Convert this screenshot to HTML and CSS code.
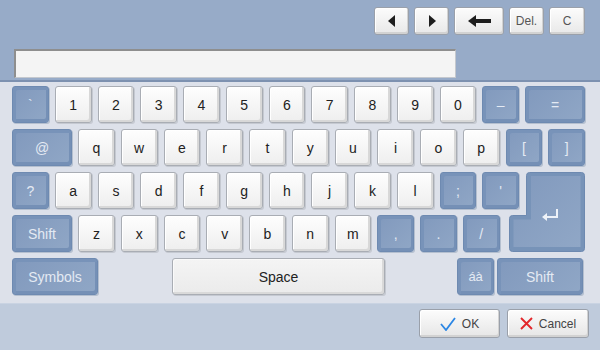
FILE: index.html
```html
<!DOCTYPE html>
<html>
<head>
<meta charset="utf-8">
<link rel="stylesheet" href="styles.css">
</head>
<body>
<div class="top">
  <div class="toolbar">
    <div class="tbtn w35"><svg width="8" height="12" viewBox="0 0 8 12"><polygon points="7,0 7,12 0,6" fill="#1e1e1e"/></svg></div>
    <div class="tbtn w35"><svg width="8" height="12" viewBox="0 0 8 12"><polygon points="1,0 1,12 8,6" fill="#1e1e1e"/></svg></div>
    <div class="tbtn w50"><svg width="23" height="12" viewBox="0 0 23 12"><polygon points="0,6 8,0 8,12" fill="#1e1e1e"/><rect x="7" y="4" width="16" height="4" fill="#1e1e1e"/></svg></div>
    <div class="tbtn w35">Del.</div>
    <div class="tbtn w36">C</div>
  </div>
  <div class="input"></div>
</div>
<div class="kb">
  <div class="row">
    <div class="k b">`</div>
    <div class="k w">1</div><div class="k w">2</div><div class="k w">3</div><div class="k w">4</div><div class="k w">5</div>
    <div class="k w">6</div><div class="k w">7</div><div class="k w">8</div><div class="k w">9</div><div class="k w">0</div>
    <div class="k b">–</div>
    <div class="k b wide">=</div>
  </div>
  <div class="row">
    <div class="k b wide">@</div>
    <div class="k w">q</div><div class="k w">w</div><div class="k w">e</div><div class="k w">r</div><div class="k w">t</div>
    <div class="k w">y</div><div class="k w">u</div><div class="k w">i</div><div class="k w">o</div><div class="k w">p</div>
    <div class="k b">[</div>
    <div class="k b">]</div>
  </div>
  <div class="block34">
    <div class="row r3">
      <div class="k b">?</div>
      <div class="k w">a</div><div class="k w">s</div><div class="k w">d</div><div class="k w">f</div><div class="k w">g</div>
      <div class="k w">h</div><div class="k w">j</div><div class="k w">k</div><div class="k w">l</div>
      <div class="k b">;</div>
      <div class="k b">'</div>
    </div>
    <div class="row r4">
      <div class="k b wide">Shift</div>
      <div class="k w">z</div><div class="k w">x</div><div class="k w">c</div><div class="k w">v</div><div class="k w">b</div>
      <div class="k w">n</div><div class="k w">m</div>
      <div class="k b">,</div>
      <div class="k b">.</div>
      <div class="k b">/</div>
    </div>
    <div class="enter">
      <svg width="76" height="80" viewBox="0 0 76 80">
        <defs>
          <linearGradient id="eg" x1="0" y1="0" x2="1" y2="1">
            <stop offset="0" stop-color="#8199bd"/>
            <stop offset="1" stop-color="#90a7c6"/>
          </linearGradient>
        </defs>
        <path d="M20.5,0.5 H72.5 Q75.5,0.5 75.5,3.5 V76.5 Q75.5,79.5 72.5,79.5 H3.5 Q0.5,79.5 0.5,76.5 V46.5 Q0.5,43.5 3.5,43.5 H17.5 V3.5 Q17.5,0.5 20.5,0.5 Z" fill="#7793b8" stroke="#6d89b0"/>
        <path d="M22,4 H71.5 V75 H4.5 V47.5 H22 Z" fill="url(#eg)"/>
        <path d="M48,37 V45 H36" fill="none" stroke="#eef2f8" stroke-width="2"/>
        <polygon points="33,45 38,41 38,49" fill="#eef2f8"/>
      </svg>
    </div>
  </div>
  <div class="row r5">
    <div class="k b sym">Symbols</div>
    <div class="k space">Space</div>
    <div class="k b acc">áà</div>
    <div class="k b shift2">Shift</div>
  </div>
</div>
<div class="bottom">
  <div class="bbtn">
    <svg width="16" height="14" viewBox="0 0 16 14"><polyline points="1,7 6,13 15,1" fill="none" stroke="#2b86e4" stroke-width="1.8"/></svg>
    <span>OK</span>
  </div>
  <div class="bbtn">
    <svg width="13" height="13" viewBox="0 0 13 13"><path d="M1,1 L12,12 M12,1 L1,12" stroke="#e3262b" stroke-width="1.9"/></svg>
    <span>Cancel</span>
  </div>
</div>
</body>
</html>
```

FILE: styles.css
```css
* { box-sizing: border-box; margin: 0; padding: 0; }

body {
  width: 600px;
  height: 350px;
  overflow: hidden;
  font-family: "Liberation Sans", Arial, sans-serif;
  background: #dde1ea;
}

.top {
  height: 82px;
  background: #97abc8;
  border-bottom: 2px solid #7d91b0;
  padding-top: 7px;
}

.toolbar {
  display: flex;
  justify-content: flex-end;
  gap: 5px;
  padding-right: 15px;
  height: 28px;
}

.tbtn {
  height: 28px;
  display: flex;
  align-items: center;
  justify-content: center;
  border: 1px solid #9aa0aa;
  border-radius: 3px;
  background: linear-gradient(#fcfcfc, #e8e8e8);
  box-shadow: inset -1px -2px 0 #d2d2d2, inset 1px 1px 0 #ffffff;
  font-size: 12px;
  color: #555;
}

.w35 { width: 35px; }
.w36 { width: 36px; }
.w50 { width: 50px; }

.input {
  margin: 14px 0 0 14px;
  width: 442px;
  height: 29px;
  background: #f4f4f4;
  border: 1px solid #c4c8ce;
  border-top: 2px solid #8e8e8e;
  border-left: 2px solid #8e8e8e;
}

.kb {
  height: 221px;
  padding: 4px 0 0 12px;
  display: flex;
  flex-direction: column;
  gap: 6px;
}

.row {
  display: flex;
  gap: 6px;
  height: 37px;
}

.k {
  width: 36.75px;
  height: 37px;
  flex: none;
  display: flex;
  align-items: center;
  justify-content: center;
  font-size: 14px;
  border-radius: 3px;
}

.w {
  color: #222;
  background: linear-gradient(#fefefe, #eeeeee);
  border: 1px solid #a9adb4;
  box-shadow: inset -2px -2px 0 #d8d8d8, inset 1px 1px 0 #ffffff, 1px 1px 0 #c5c9d1;
}

.b {
  color: #e4eaf3;
  background: linear-gradient(135deg, #8199bd, #90a7c6);
  border: 1px solid #6e8ab1;
  box-shadow: inset 3px 3px 0 #7893b9, inset -2px -3px 0 #7590b6, 1px 1px 0 #b4bfcf;
}

.wide { width: 60px; }

.block34 {
  display: grid;
  grid-template-columns: 497px 17px 59px;
  grid-template-rows: 37px 37px;
  row-gap: 6px;
}

.r3 { grid-column: 1 / 3; grid-row: 1; }
.r4 { grid-column: 1; grid-row: 2; }

.enter {
  grid-column: 2 / 4;
  grid-row: 1 / 3;
  height: 80px;
}

.enter svg { display: block; }

.r5 { padding-right: 17px; }

.sym { width: 86px; }

.space {
  width: 213px;
  margin-left: 68px;
  color: #222;
  background: linear-gradient(#f4f4f4, #ebebeb);
  border: 1px solid #a9adb4;
  box-shadow: inset -2px -2px 0 #d9d9d9, inset 1px 1px 0 #fafafa, 1px 1px 0 #c5c9d1;
}

.acc {
  margin-left: auto;
  font-size: 13px;
}

.shift2 {
  width: 86px;
  margin-left: -3px;
}

.bottom {
  height: 47px;
  background: #bfcbdc;
  border-top: 1px solid #c9d3e2;
  display: flex;
  justify-content: flex-end;
  gap: 7px;
  padding: 5px 11px 0 0;
}

.bbtn {
  width: 81px;
  height: 29px;
  display: flex;
  align-items: center;
  justify-content: center;
  gap: 6px;
  border: 1px solid #9aa0aa;
  border-radius: 3px;
  background: linear-gradient(#fcfcfc, #e6e6e6);
  box-shadow: inset -1px -2px 0 #d2d2d2, inset 1px 1px 0 #ffffff;
  font-size: 12px;
  color: #444;
}

.bbtn + .bbtn { width: 82px; }
```
